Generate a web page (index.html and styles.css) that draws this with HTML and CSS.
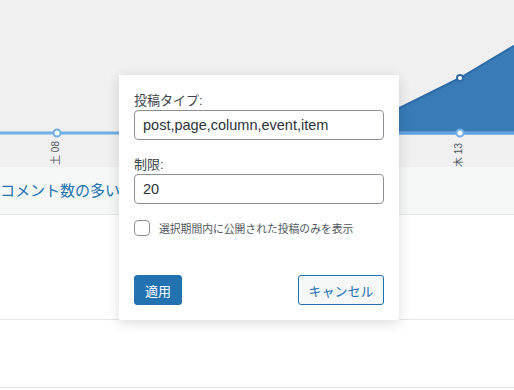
FILE: index.html
```html
<!DOCTYPE html>
<html lang="ja">
<head>
    <meta charset="UTF-8">
    <title>統計</title>
    <link rel="stylesheet" href="styles.css">
</head>
<body>
    <!-- Chart -->
    <div class="chart">
        <svg class="chart-svg" width="514" height="167" viewBox="0 0 514 167">
            <polygon class="area" points="298.8,133 379.4,118 460,78 540.6,30 540.6,133"/>
            <polyline class="area-line" points="298.8,133 379.4,118 460,78 540.6,30"/>
            <line class="base" x1="0" y1="133" x2="514" y2="133"/>
            <line class="base-under" x1="300" y1="133.5" x2="514" y2="133.5"/>
            <circle class="dot" cx="57" cy="133" r="3.5"/>
            <circle class="dot" cx="460" cy="133" r="3.5"/>
            <circle class="dot dot-top" cx="460" cy="78" r="3.5"/>
        </svg>
        <span class="tick tick-a">土 08</span>
        <span class="tick tick-b">木 13</span>
    </div>

    <!-- Ranking rows -->
    <div class="row row-head">コメント数の多い投稿</div>
    <div class="row row-tall"></div>
    <div class="row row-short"></div>

    <!-- Filter popup -->
    <div class="popup">
        <label class="field-label">投稿タイプ:</label>
        <input class="field" type="text" value="post,page,column,event,item">
        <label class="field-label second">制限:</label>
        <input class="field" type="text" value="20">
        <label class="check">
            <input type="checkbox">
            <span>選択期間内に公開された投稿のみを表示</span>
        </label>
        <div class="actions">
            <button class="btn btn-primary">適用</button>
            <button class="btn btn-secondary">キャンセル</button>
        </div>
    </div>
</body>
</html>
```

FILE: styles.css
```css
body {
    margin: 0;
    background-color: #fff;
    font-family: "Liberation Sans", "Noto Sans CJK JP", sans-serif;
    color: #3c434a;
    position: relative;
    width: 514px;
    height: 390px;
    overflow: hidden;
}

.chart {
    position: relative;
    height: 167px;
    background-color: #f0f0f1;
}

.chart-svg {
    display: block;
}

.area {
    fill: #387bb6;
}

.area-line {
    fill: none;
    stroke: #2d6ca8;
    stroke-width: 2;
}

.base {
    stroke: #72aee6;
    stroke-width: 3;
}

.base-under {
    stroke: #5e9ede;
    stroke-width: 2;
}

.dot {
    fill: #fff;
    stroke: #72aee6;
    stroke-width: 2;
}

.dot-top {
    stroke: #2d6ca8;
    r: 3;
}

.tick {
    position: absolute;
    top: 146px;
    font-size: 10px;
    line-height: 12px;
    color: #50575e;
    white-space: nowrap;
    transform: rotate(-90deg);
    transform-origin: center;
}

.tick-a {
    left: 44px;
    top: 147px;
}

.tick-b {
    left: 447px;
    top: 149px;
}

.row {
    border-bottom: 1px solid #e6e6e8;
}

.row-head {
    height: 47px;
    line-height: 47px;
    background-color: #f6f7f7;
    color: #2271b1;
    font-size: 15px;
    white-space: nowrap;
    overflow: hidden;
}

.row-tall {
    height: 104px;
}

.row-short {
    height: 67px;
}

.popup {
    position: absolute;
    left: 119px;
    top: 75px;
    width: 250px;
    height: 228px;
    padding: 17px 15px 0;
    background-color: #fff;
    box-shadow: 0 3px 12px rgba(0, 0, 0, 0.14);
    display: flex;
    flex-direction: column;
}

.field-label {
    display: block;
    font-size: 13px;
    line-height: 18px;
    color: #3c434a;
}

.field-label.second {
    margin-top: 16px;
}

.field {
    box-sizing: border-box;
    width: 250px;
    height: 30px;
    margin: 0;
    padding: 0 8px;
    border: 1px solid #8c8f94;
    border-radius: 4px;
    font-family: inherit;
    font-size: 14.5px;
    color: #2c3338;
    background: #fff;
}

.check {
    display: flex;
    align-items: center;
    gap: 9px;
    margin-top: 16px;
    font-size: 10.8px;
    color: #50575e;
}

.check input {
    appearance: none;
    margin: 0;
    width: 16px;
    height: 16px;
    border: 1px solid #8c8f94;
    border-radius: 4px;
    background: #fff;
}

.actions {
    display: flex;
    justify-content: space-between;
    margin-top: 39px;
}

.btn {
    box-sizing: border-box;
    height: 30px;
    padding: 0;
    white-space: nowrap;
    border-radius: 3px;
    font-family: inherit;
    font-size: 13px;
    border: 1px solid #2271b1;
}

.btn-primary {
    background-color: #2271b1;
    color: #fff;
    width: 48px;
}

.btn-secondary {
    background-color: #f6f7f7;
    color: #2271b1;
    width: 86px;
}
```
